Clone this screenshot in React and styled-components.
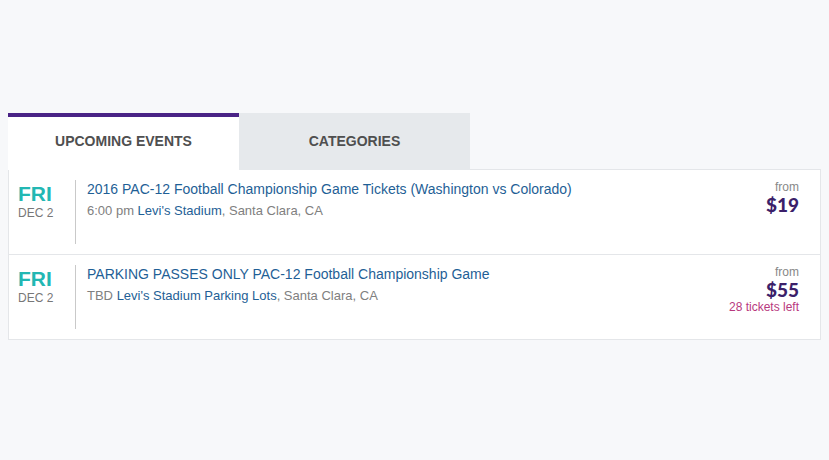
import React from 'react';
import styled, { createGlobalStyle } from 'styled-components';

const GlobalStyle = createGlobalStyle`
  body {
    margin: 0;
    background: #f7f8fa;
    font-family: "Liberation Sans", Arial, sans-serif;
  }
`;

const Page = styled.div`
  padding: 113px 8px 0 8px;
`;

const Tabs = styled.div`
  display: flex;
  position: relative;
  z-index: 1;
  margin-bottom: -1px;
`;

const Tab = styled.div`
  width: 231px;
  height: 57px;
  box-sizing: border-box;
  border-top: ${p => (p.active ? '4px solid #4a2386' : 'none')};
  padding-bottom: ${p => (p.active ? '5px' : '2px')};
  background: ${p => (p.active ? '#ffffff' : '#e6e9ec')};
  display: flex;
  align-items: center;
  justify-content: center;
  font-size: 14px;
  font-weight: bold;
  color: #4f4f4f;
  text-transform: uppercase;
`;

const List = styled.div`
  background: #ffffff;
  border: 1px solid #e4e6e9;
`;

const Row = styled.div`
  display: flex;
  height: 84px;
  border-top: ${p => (p.first ? 'none' : '1px solid #e4e6e9')};
`;

const DateCol = styled.div`
  width: 57px;
  padding: 13px 0 0 9px;
  margin: 10px 0;
  border-right: 1px solid #c9c9c9;
  box-sizing: content-box;
`;

const Day = styled.div`
  font-size: 21px;
  font-weight: bold;
  color: #22b7b3;
  line-height: 21px;
  margin-top: -10px;
`;

const DateText = styled.div`
  font-size: 12px;
  color: #777777;
  margin-top: 2px;
`;

const Info = styled.div`
  flex: 1;
  padding: 11px 0 0 11px;
`;

const Title = styled.a`
  display: block;
  font-size: 14px;
  line-height: 17px;
  color: #1f5f96;
  text-decoration: none;
`;

const Sub = styled.div`
  font-size: 13px;
  line-height: 15px;
  color: #808080;
  margin-top: 5px;
`;

const VenueLink = styled.a`
  color: #1f5f96;
  text-decoration: none;
`;

const Price = styled.div`
  padding: 10px 21px 0 0;
  text-align: right;
`;

const From = styled.div`
  font-size: 12px;
  line-height: 14px;
  color: #888888;
`;

const Amount = styled.div`
  font-family: Lato, "Liberation Sans", sans-serif;
  font-size: 19px;
  font-weight: 900;
  line-height: 21px;
  color: #3b1f6a;
`;

const Left = styled.div`
  font-size: 12px;
  line-height: 14px;
  color: #b8387e;
`;

const events = [
  {
    title: '2016 PAC-12 Football Championship Game Tickets (Washington vs Colorado)',
    time: '6:00 pm',
    venue: "Levi's Stadium",
    price: '$19',
  },
  {
    title: 'PARKING PASSES ONLY PAC-12 Football Championship Game',
    time: 'TBD',
    venue: "Levi's Stadium Parking Lots",
    price: '$55',
    left: '28 tickets left',
  },
];

const App = () => {
  return (
    <Page>
      <GlobalStyle />
      <Tabs>
        <Tab active>Upcoming Events</Tab>
        <Tab>Categories</Tab>
      </Tabs>
      <List>
        {events.map((e, i) => (
          <Row key={i} first={i === 0}>
            <DateCol>
              <Day>FRI</Day>
              <DateText>DEC 2</DateText>
            </DateCol>
            <Info>
              <Title href="#">{e.title}</Title>
              <Sub>
                {e.time} <VenueLink href="#">{e.venue}</VenueLink>, Santa Clara, CA
              </Sub>
            </Info>
            <Price>
              <From>from</From>
              <Amount>{e.price}</Amount>
              {e.left && <Left>{e.left}</Left>}
            </Price>
          </Row>
        ))}
      </List>
    </Page>
  );
};

export default App;
